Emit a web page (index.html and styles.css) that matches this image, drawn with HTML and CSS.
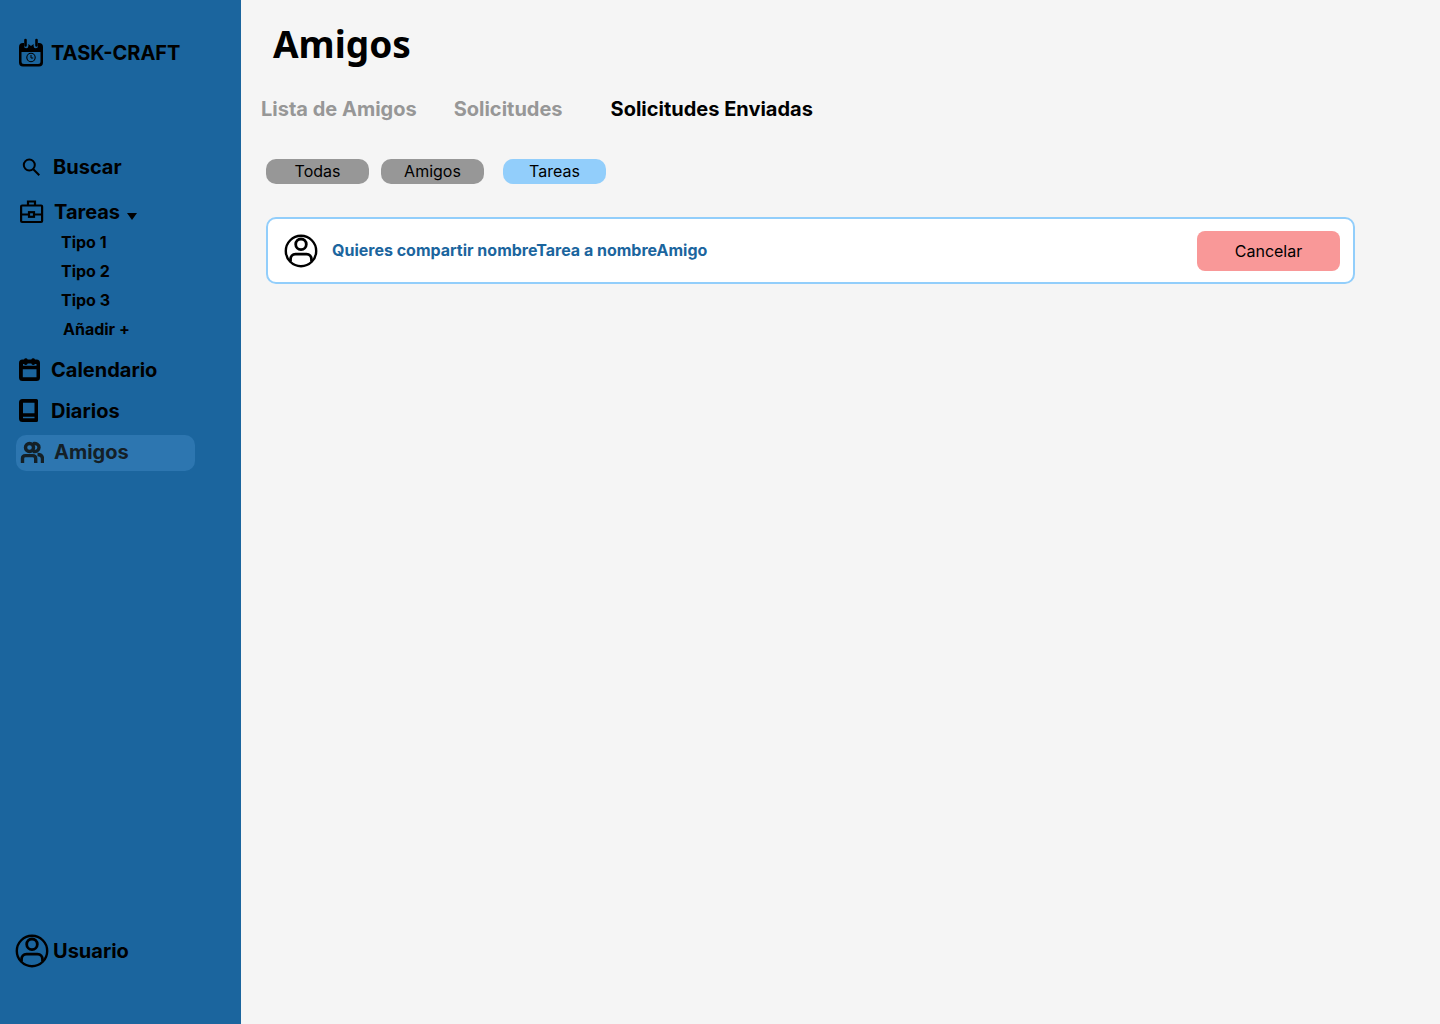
FILE: index.html
```html
<!DOCTYPE html>
<html lang="es">
<head>
<meta charset="utf-8">
<meta name="viewport" content="width=device-width, initial-scale=1">
<title>Task-Craft – Amigos</title>
<link rel="stylesheet" href="styles.css">
</head>
<body>
<svg class="sprite" aria-hidden="true">
  <symbol id="user" viewBox="0 0 34 34">
    <g fill="none" stroke="currentColor">
      <circle cx="17" cy="17" r="15.200" stroke-width="2.400"/>
      <circle cx="17" cy="10.300" r="5.300" stroke-width="2.800"/>
      <path d="M6.500 27.500v-2c0-3 2-5.300 5-5.300h11c3 0 5 2.300 5 5.300v2" stroke-width="2.800"/>
    </g>
  </symbol>
</svg>
<div class="app">
  <aside class="sidebar">
    <a class="brand" href="#">
      <svg class="icon" width="26" height="30" viewBox="0 0 26 30" aria-hidden="true">
        <path fill="currentColor" fill-rule="evenodd" d="M5 5h1v3a2.200 2.200 0 0 0 4.400 0V6l2.600 2 2.600-2v2a2.200 2.200 0 0 0 4.400 0V5h1a4 4 0 0 1 4 4v15.500a4 4 0 0 1-4 4H5a4 4 0 0 1-4-4V9a4 4 0 0 1 4-4zM3.500 14v9.500a2.500 2.500 0 0 0 2.500 2.500h14a2.500 2.500 0 0 0 2.500-2.500V14z"/>
        <path d="M7.500 2v5.500M18.500 2v5.500" stroke="currentColor" stroke-width="2.600" stroke-linecap="round"/>
        <circle cx="13" cy="19.500" r="4.200" fill="none" stroke="currentColor" stroke-width="1.100"/>
        <path d="M13 17v3h2.200" fill="none" stroke="currentColor"/>
      </svg>
      <span>TASK-CRAFT</span>
    </a>
    <nav class="nav">
      <a class="item item-search" href="#">
        <svg class="icon" width="20" height="20" viewBox="0 0 20 20" fill="none" stroke="currentColor" stroke-width="2" aria-hidden="true"><circle cx="8.300" cy="8" r="5.500"/><path d="M12.300 12.200l6 6"/></svg>
        <span>Buscar</span>
      </a>
      <a class="item item-tasks" href="#">
        <svg class="icon" width="24" height="24" viewBox="0 0 24 24" fill="none" stroke="currentColor" stroke-width="2.200" aria-hidden="true"><rect x="1.100" y="5.500" width="21" height="16.500" rx="1"/><path d="M8 5.500V1.500h7v4M1 14.500h7.500M14.500 14.500H22"/><rect x="9" y="12.200" width="5" height="4.600"/></svg>
        <span>Tareas</span>
        <svg class="caret" width="10" height="7" viewBox="0 0 10 7" aria-hidden="true"><path d="M0 0h10L5 7z" fill="currentColor"/></svg>
      </a>
      <ul class="types">
        <li><a href="#">Tipo 1</a></li>
        <li><a href="#">Tipo 2</a></li>
        <li><a href="#">Tipo 3</a></li>
        <li><button type="button">Añadir +</button></li>
      </ul>
      <a class="item" href="#">
        <svg class="icon" width="24" height="24" viewBox="0 0 24 24" aria-hidden="true"><path fill="currentColor" fill-rule="evenodd" d="M4.500 1.500H6a2 2 0 0 1 3.700 0h3.600a2 2 0 0 1 3.700 0h1.500A3.500 3.500 0 0 1 22 5V19.500a3.500 3.500 0 0 1-3.500 3.500h-14A3.500 3.500 0 0 1 1 19.500V5A3.500 3.500 0 0 1 4.500 1.500zM5 6v1.700h13.500V6H17a2 2 0 0 1-3.700-.5H9.700A2 2 0 0 1 6 6zM4.800 11.200v8.100h13.700v-8.100z"/></svg>
        <span>Calendario</span>
      </a>
      <a class="item" href="#">
        <svg class="icon" width="24" height="24" viewBox="0 0 24 24" aria-hidden="true"><path fill="currentColor" fill-rule="evenodd" d="M4.500 0h14A1.500 1.500 0 0 1 20 1.500v20a1.500 1.500 0 0 1-1.500 1.500h-14A3.500 3.500 0 0 1 1 19.500v-16A3.500 3.500 0 0 1 4.500 0zM5 3.700v10.600h11.500V3.700zM5 17.800v1.400h11.500v-1.400z"/></svg>
        <span>Diarios</span>
      </a>
      <a class="item item-friends" href="#" aria-current="page">
        <svg class="icon" width="24" height="22" viewBox="0 0 24 22" fill="none" stroke="currentColor" stroke-width="3.400" aria-hidden="true"><circle cx="9.500" cy="6.500" r="4"/><path d="M13 2.700c3-.9 6 .8 6 3.800s-3 4.700-6 3.800M2.500 22v-4.500c0-2 1.300-2.900 3-2.900h7c1.700 0 3.200.9 3.200 2.900V22M17.500 13.500c3 0 5 1.500 5 4.500v4"/></svg>
        <span>Amigos</span>
      </a>
    </nav>
    <a class="account" href="#">
      <svg class="avatar" aria-hidden="true"><use href="#user"/></svg>
      <span>Usuario</span>
    </a>
  </aside>
  <main class="content">
    <h1>Amigos</h1>
    <nav class="tabs">
      <a href="#">Lista de Amigos</a>
      <a href="#">Solicitudes</a>
      <a href="#" aria-current="page">Solicitudes Enviadas</a>
    </nav>
    <div class="filters">
      <button type="button">Todas</button>
      <button type="button">Amigos</button>
      <button type="button" class="selected" aria-pressed="true">Tareas</button>
    </div>
    <article class="request">
      <svg class="avatar" aria-hidden="true"><use href="#user"/></svg>
      <p>Quieres compartir nombreTarea a nombreAmigo</p>
      <button type="button">Cancelar</button>
    </article>
  </main>
</div>
</body>
</html>
```
FILE: styles.css
```css
* { box-sizing: border-box; }
body {
  margin: 0;
  background: #f5f5f5;
  color: #000;
  font: 400 16px/24px Inter, sans-serif;
}
a { color: inherit; text-decoration: none; }
button { border: 0; padding: 0; color: inherit; font: inherit; cursor: pointer; }
h1, p, ul { margin: 0; padding: 0; }
.sprite { display: none; }
.icon, .avatar, .caret { flex: none; }
.avatar { width: 34px; height: 34px; }

.app { display: flex; min-height: 100vh; }

.sidebar {
  display: flex;
  flex-direction: column;
  flex: 0 0 241px;
  padding: 35px 46px 55px 16px;
  background: #1b659e;
  font-size: 20px;
  font-weight: 700;
}
.brand { display: flex; align-items: center; gap: 7px; height: 36px; padding-left: 2px; white-space: nowrap; }
.nav { display: flex; flex-direction: column; gap: 5px; margin-top: 78px; }
.item { display: flex; align-items: center; gap: 9px; height: 36px; padding-left: 2px; border-radius: 10px; }
.item-search { gap: 12px; padding-left: 5px; }
.item-tasks { gap: 10px; margin-top: 4px; padding-left: 4px; }
.caret { margin: 9px 0 0 -3px; }
.item-friends { gap: 10px; margin-top: 1px; padding: 0 0 2px 4px; background: #2d76b0; color: #142027; }
.types { margin: -7px 0 3px; padding-left: 45px; list-style: none; font-size: 16px; line-height: 29px; }
.types button { padding-left: 2px; background: none; }
.account { display: flex; align-items: center; gap: 4px; height: 36px; margin: auto 0 0 -1px; }

.content { flex: 1; padding: 20px 85px 40px 25px; }
h1 { padding-left: 7px; font: 700 37px/48px "Noto Sans", sans-serif; }
.tabs {
  display: flex;
  margin: 29px 0 0 -5px;
  color: #979797;
  font-size: 20px;
  font-weight: 700;
}
.tabs a { margin-right: 37px; }
.tabs a:nth-child(2) { margin-right: 48px; }
.tabs [aria-current] { color: #000; }
.filters { display: flex; gap: 12px; margin-top: 38px; }
.filters button { width: 103px; height: 25px; padding-bottom: 2px; border-radius: 10px; background: #979797; }
.filters .selected { margin-left: 7px; background: #92cefb; }
.request {
  display: flex;
  align-items: center;
  gap: 14px;
  min-height: 67px;
  margin-top: 33px;
  padding: 12px 13px 11px 16px;
  border: 2px solid #92cefb;
  border-radius: 10px;
  background: #fff;
}
.request p { flex: 1; padding-bottom: 2px; color: #1b659e; font-weight: 700; }
.request button { width: 143px; height: 40px; border-radius: 8px; background: #f99898; }
```
